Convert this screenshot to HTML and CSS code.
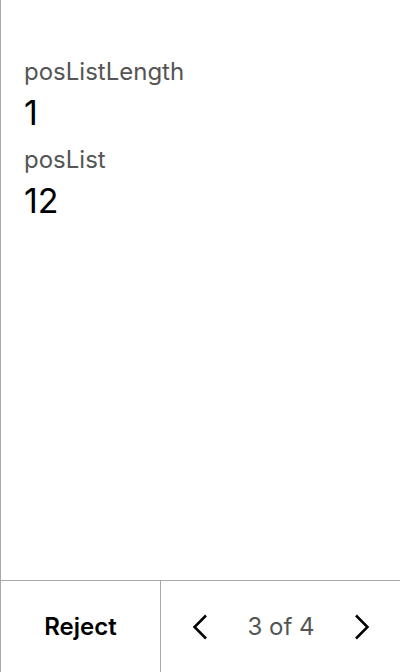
FILE: index.html
```html
<!DOCTYPE html>
<html>
<head>
<meta charset="utf-8">
<link rel="stylesheet" href="styles.css">
</head>
<body>
<div class="app">
  <main class="content">
    <div class="field">
      <div class="label">posListLength</div>
      <div class="value">1</div>
    </div>
    <div class="field">
      <div class="label">posList</div>
      <div class="value">12</div>
    </div>
  </main>
  <footer class="bar">
    <div class="reject">Reject</div>
    <div class="pager">
      <svg class="chev" width="16" height="26" viewBox="0 0 16 26"><path d="M14 1.5 L2.5 13 L14 24.5" fill="none" stroke="#000" stroke-width="2.5"/></svg>
      <span class="count">3 of 4</span>
      <svg class="chev" width="16" height="26" viewBox="0 0 16 26"><path d="M2 1.5 L13.5 13 L2 24.5" fill="none" stroke="#000" stroke-width="2.5"/></svg>
    </div>
  </footer>
</div>
</body>
</html>
```

FILE: styles.css
```css
html, body { margin: 0; padding: 0; background: #fff; }
body { font-family: Inter, "Noto Sans", sans-serif; }
.app {
  width: 400px;
  height: 672px;
  box-sizing: border-box;
  border-left: 1px solid #a8a8a8;
  display: flex;
  flex-direction: column;
}
.content {
  flex: 1;
  padding: 56px 23px 0;
  display: flex;
  flex-direction: column;
  gap: 6px;
}
.field { display: flex; flex-direction: column; }
.label { font-size: 24px; line-height: 32px; color: #555; }
.value { font-size: 34px; line-height: 50px; color: #000; }
.bar {
  height: 92px;
  border-top: 1px solid #a8a8a8;
  display: flex;
  box-sizing: border-box;
}
.reject {
  width: 159px;
  border-right: 1px solid #a8a8a8;
  display: flex;
  align-items: center;
  justify-content: center;
  font-weight: 600;
  font-size: 24px;
  color: #000;
  padding-bottom: 1px;
}
.pager {
  flex: 1;
  display: flex;
  align-items: center;
  justify-content: space-between;
  padding: 0 30px 0 31px;
}
.count { font-size: 24px; color: #555; }
```
